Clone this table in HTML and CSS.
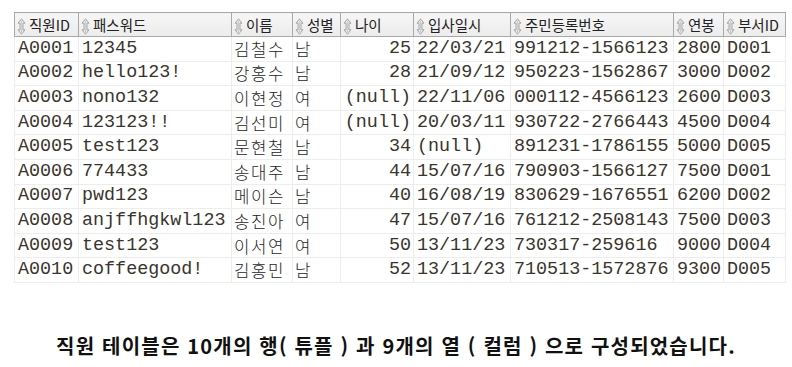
FILE: index.html
```html
<!DOCTYPE html>
<html lang="ko">
<head>
<meta charset="utf-8">
<link rel="stylesheet" href="styles.css">
</head>
<body>
<svg width="0" height="0" class="defs">
  <defs>
    <symbol id="sort" viewBox="0 0 9 17">
      <path d="M4.5 0.8 L8 5.2 L6 5.2 L6 11.8 L8 11.8 L4.5 16.2 L1 11.8 L3 11.8 L3 5.2 L1 5.2 Z" fill="#e6e6e6" stroke="#a0a0a0" stroke-width="0.9" stroke-linejoin="round"/>
      <path d="M4.5 3 L4.5 14" stroke="#c4c4c4" stroke-width="0.8"/>
    </symbol>
  </defs>
</svg>
<div class="page">
  <table class="grid">
    <colgroup>
      <col class="c1"><col class="c2"><col class="c3"><col class="c4"><col class="c5"><col class="c6"><col class="c7"><col class="c8"><col class="c9">
    </colgroup>
    <thead>
      <tr>
        <th><svg class="ico"><use href="#sort"/></svg>직원ID</th>
        <th><svg class="ico"><use href="#sort"/></svg>패스워드</th>
        <th><svg class="ico"><use href="#sort"/></svg>이름</th>
        <th><svg class="ico"><use href="#sort"/></svg>성별</th>
        <th><svg class="ico"><use href="#sort"/></svg>나이</th>
        <th><svg class="ico"><use href="#sort"/></svg>입사일시</th>
        <th><svg class="ico"><use href="#sort"/></svg>주민등록번호</th>
        <th><svg class="ico"><use href="#sort"/></svg>연봉</th>
        <th><svg class="ico"><use href="#sort"/></svg>부서ID</th>
      </tr>
    </thead>
    <tbody>
      <tr><td>A0001</td><td>12345</td><td class="ko">김철수</td><td class="ko">남</td><td class="num">25</td><td>22/03/21</td><td>991212-1566123</td><td class="num">2800</td><td>D001</td></tr>
      <tr><td>A0002</td><td>hello123!</td><td class="ko">강홍수</td><td class="ko">남</td><td class="num">28</td><td>21/09/12</td><td>950223-1562867</td><td class="num">3000</td><td>D002</td></tr>
      <tr><td>A0003</td><td>nono132</td><td class="ko">이현정</td><td class="ko">여</td><td class="num">(null)</td><td>22/11/06</td><td>000112-4566123</td><td class="num">2600</td><td>D003</td></tr>
      <tr><td>A0004</td><td>123123!!</td><td class="ko">김선미</td><td class="ko">여</td><td class="num">(null)</td><td>20/03/11</td><td>930722-2766443</td><td class="num">4500</td><td>D004</td></tr>
      <tr><td>A0005</td><td>test123</td><td class="ko">문현철</td><td class="ko">남</td><td class="num">34</td><td>(null)</td><td>891231-1786155</td><td class="num">5000</td><td>D005</td></tr>
      <tr><td>A0006</td><td>774433</td><td class="ko">송대주</td><td class="ko">남</td><td class="num">44</td><td>15/07/16</td><td>790903-1566127</td><td class="num">7500</td><td>D001</td></tr>
      <tr><td>A0007</td><td>pwd123</td><td class="ko">메이슨</td><td class="ko">남</td><td class="num">40</td><td>16/08/19</td><td>830629-1676551</td><td class="num">6200</td><td>D002</td></tr>
      <tr><td>A0008</td><td>anjffhgkwl123</td><td class="ko">송진아</td><td class="ko">여</td><td class="num">47</td><td>15/07/16</td><td>761212-2508143</td><td class="num">7500</td><td>D003</td></tr>
      <tr><td>A0009</td><td>test123</td><td class="ko">이서연</td><td class="ko">여</td><td class="num">50</td><td>13/11/23</td><td>730317-259616</td><td class="num">9000</td><td>D004</td></tr>
      <tr><td>A0010</td><td>coffeegood!</td><td class="ko">김홍민</td><td class="ko">남</td><td class="num">52</td><td>13/11/23</td><td>710513-1572876</td><td class="num">9300</td><td>D005</td></tr>
    </tbody>
  </table>
  <p class="caption">직원 테이블은 10개의 행( 튜플 ) 과 9개의 열 ( 컬럼 ) 으로 구성되었습니다.</p>
</div>
</body>
</html>
```

FILE: styles.css
```css
html, body {
  margin: 0;
  padding: 0;
  background: #ffffff;
}

.defs {
  position: absolute;
  width: 0;
  height: 0;
}

.page {
  width: 792px;
  height: 367px;
  padding: 12px 0 0 14px;
  box-sizing: border-box;
}

.grid {
  border-collapse: collapse;
  table-layout: fixed;
  width: 771px;
}

.c1 { width: 64px; }
.c2 { width: 153px; }
.c3 { width: 61px; }
.c4 { width: 48px; }
.c5 { width: 73px; }
.c6 { width: 97px; }
.c7 { width: 163px; }
.c8 { width: 50px; }
.c9 { width: 62px; }

.grid th {
  height: 24px;
  padding: 0 0 0 2px;
  box-sizing: border-box;
  background: linear-gradient(#f6f6f6, #ececec);
  border: 1px solid #a9a9a9;
  font-family: "Noto Sans CJK KR", sans-serif;
  font-size: 14.5px;
  font-weight: 400;
  color: #222;
  text-align: left;
  white-space: nowrap;
  overflow: hidden;
  line-height: 22px;
}

.ico {
  width: 9px;
  height: 17px;
  vertical-align: -4px;
  margin-right: 3px;
}

.grid td {
  height: 24.6px;
  padding: 0 2px 0 3px;
  box-sizing: border-box;
  border: 1px solid #ededed;
  font-family: "Liberation Mono", "Courier New", monospace;
  font-size: 18.4px;
  color: #3a342c;
  white-space: nowrap;
  line-height: 22px;
}

.grid td.ko {
  font-family: "Noto Sans CJK KR", sans-serif;
  font-size: 16.8px;
  letter-spacing: 1.6px;
  font-weight: 300;
  color: #1e1e1e;
  padding-left: 2px;
  padding-right: 0;
}

.grid td.num {
  text-align: right;
  padding-right: 2px;
}

.caption {
  margin: 50px 0 0 -14px;
  text-align: center;
  font-family: "Noto Sans CJK KR", sans-serif;
  font-weight: 700;
  font-size: 20px;
  letter-spacing: 1.2px;
  color: #111;
  line-height: 26px;
}
```
